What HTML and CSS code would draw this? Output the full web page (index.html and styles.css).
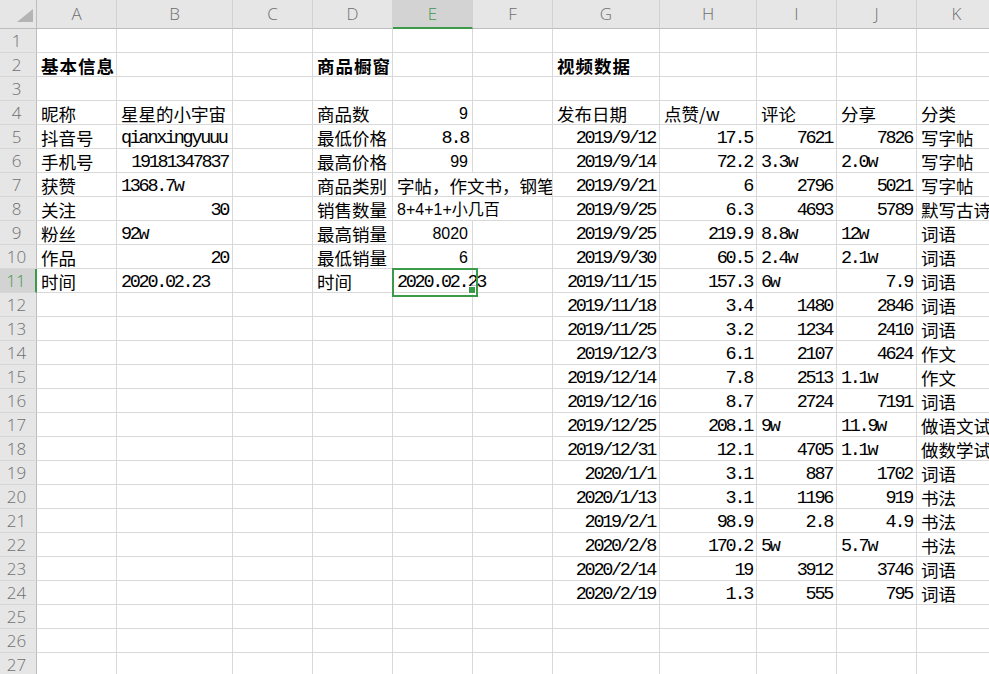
FILE: index.html
```html
<!DOCTYPE html>
<html lang="zh-CN">

<head>
  <meta charset="UTF-8" />
  <title>Sheet1</title>
  <link rel="stylesheet" href="styles.css">
</head>

<body>
  <div class="sheet" id="sheet"></div>

  <script>
    // 表格数据：每行按 A..K 列排列
    let cols = ['A', 'B', 'C', 'D', 'E', 'F', 'G', 'H', 'I', 'J', 'K']
    let rows = {
      2: ['基本信息', '', '', '商品橱窗', '', '', '视频数据'],
      4: ['昵称', '星星的小宇宙', '', '商品数', '9', '', '发布日期', '点赞/w', '评论', '分享', '分类'],
      5: ['抖音号', 'qianxingyuuu', '', '最低价格', '8.8', '', '2019/9/12', '17.5', '7621', '7826', '写字帖'],
      6: ['手机号', '19181347837', '', '最高价格', '99', '', '2019/9/14', '72.2', '3.3w', '2.0w', '写字帖'],
      7: ['获赞', '1368.7w', '', '商品类别', '字帖，作文书，钢笔等', '', '2019/9/21', '6', '2796', '5021', '写字帖'],
      8: ['关注', '30', '', '销售数量', '8+4+1+小几百', '', '2019/9/25', '6.3', '4693', '5789', '默写古诗词'],
      9: ['粉丝', '92w', '', '最高销量', '8020', '', '2019/9/25', '219.9', '8.8w', '12w', '词语'],
      10: ['作品', '20', '', '最低销量', '6', '', '2019/9/30', '60.5', '2.4w', '2.1w', '词语'],
      11: ['时间', '2020.02.23', '', '时间', '2020.02.23', '', '2019/11/15', '157.3', '6w', '7.9', '词语'],
      12: ['', '', '', '', '', '', '2019/11/18', '3.4', '1480', '2846', '词语'],
      13: ['', '', '', '', '', '', '2019/11/25', '3.2', '1234', '2410', '词语'],
      14: ['', '', '', '', '', '', '2019/12/3', '6.1', '2107', '4624', '作文'],
      15: ['', '', '', '', '', '', '2019/12/14', '7.8', '2513', '1.1w', '作文'],
      16: ['', '', '', '', '', '', '2019/12/16', '8.7', '2724', '7191', '词语'],
      17: ['', '', '', '', '', '', '2019/12/25', '208.1', '9w', '11.9w', '做语文试卷'],
      18: ['', '', '', '', '', '', '2019/12/31', '12.1', '4705', '1.1w', '做数学试卷'],
      19: ['', '', '', '', '', '', '2020/1/1', '3.1', '887', '1702', '词语'],
      20: ['', '', '', '', '', '', '2020/1/13', '3.1', '1196', '919', '书法'],
      21: ['', '', '', '', '', '', '2019/2/1', '98.9', '2.8', '4.9', '书法'],
      22: ['', '', '', '', '', '', '2020/2/8', '170.2', '5w', '5.7w', '书法'],
      23: ['', '', '', '', '', '', '2020/2/14', '19', '3912', '3746', '词语'],
      24: ['', '', '', '', '', '', '2020/2/19', '1.3', '555', '795', '词语']
    }
    let spanCells = ['E7', 'E8'] //文字溢出到 F 列
    let sansCells = ['E4', 'E6', 'E8', 'E9', 'E10']
    let active = 'E11'

    let sheet = document.querySelector('#sheet')

    //1.列头
    let corner = document.createElement('div')
    corner.className = 'corner'
    corner.innerHTML = '<span class="tri"></span>'
    sheet.appendChild(corner)
    cols.forEach(function (c) {
      let hd = document.createElement('div')
      hd.className = c === active[0] ? 'hd hd-on' : 'hd'
      hd.innerText = c
      sheet.appendChild(hd)
    })

    //2.行
    for (let r = 1; r <= 27; r++) {
      let rh = document.createElement('div')
      rh.className = String(r) === active.slice(1) ? 'rh rh-on' : 'rh'
      rh.innerText = r
      sheet.appendChild(rh)

      let vals = rows[r] || []
      for (let i = 0; i < cols.length; i++) {
        let id = cols[i] + r
        let v = vals[i] || ''
        let cls = ['cell']
        if (/[\u4e00-\u9fa5，]/.test(v)) {
          cls.push('cjk')
        } else if (v) {
          cls.push('mono')
        }
        if (/^\d+(\.\d+)?$|^\d{4}\/\d+\/\d+$/.test(v)) cls.push('num')
        if (sansCells.includes(id)) cls.push('sans')
        if (r === 2) cls.push('title')
        if (id === active) cls.push('active')
        if (spanCells.includes(id)) {
          cls.push('span2')
          i++
        }
        let cell = document.createElement('div')
        cell.className = cls.join(' ')
        cell.innerText = v
        sheet.appendChild(cell)
      }
    }
  </script>
</body>

</html>
```

FILE: styles.css
```css
* {
  margin: 0;
  padding: 0;
  box-sizing: border-box;
}

body {
  width: 989px;
  height: 674px;
  overflow: hidden;
  background: #fff;
}

.sheet {
  display: grid;
  grid-template-columns: 37px 80px 116px 80px 80px 80px 80px 107px 97px 80px 80px 80px;
  grid-template-rows: 29px;
  grid-auto-rows: 24px;
  width: max-content;
}

.corner,
.hd,
.rh {
  background: #e6e6e6;
  color: #6f6f6f;
  font-family: "Open Sans", "Noto Sans", sans-serif;
  font-size: 17px;
  font-weight: 300;
  text-align: center;
}

.corner {
  display: flex;
  justify-content: flex-end;
  align-items: flex-end;
  padding: 0 3px 6px 0;
  border-right: 1px solid #bdbdbd;
  border-bottom: 1px solid #bdbdbd;
}

.corner .tri {
  width: 16px;
  height: 13px;
  background: #b4b4b4;
  clip-path: polygon(100% 0, 100% 100%, 0 100%);
}

.hd {
  line-height: 27px;
  border-right: 1px solid #d2d2d2;
  border-bottom: 1px solid #bdbdbd;
}

.hd-on {
  background: #d3d3d3;
  color: #3f9a4d;
  border-bottom: 2px solid #3a9a4a;
}

.rh {
  line-height: 23px;
  padding-right: 3px;
  border-right: 1px solid #bdbdbd;
  border-bottom: 1px solid #d6d6d6;
}

.rh-on {
  background: #d3d3d3;
  color: #3f9a4d;
  border-right: 2px solid #3a9a4a;
}

.cell {
  border-right: 1px solid #d9d9d9;
  border-bottom: 1px solid #d9d9d9;
  padding: 1px 3px 0 4px;
  line-height: 23px;
  font-size: 17.5px;
  color: #000;
  white-space: nowrap;
  overflow: hidden;
}

.cjk {
  font-family: "Noto Sans CJK SC", sans-serif;
}

.mono {
  font-family: "Liberation Mono", monospace;
  font-size: 18.5px;
  letter-spacing: -2.3px;
  padding-top: 2px;
}

.sans {
  font-family: "Liberation Sans", "Noto Sans CJK SC", sans-serif;
  font-size: 16px;
  letter-spacing: 0;
  padding-top: 1px;
}

.num {
  text-align: right;
  padding-right: 4px;
}

.title {
  font-weight: 700;
  letter-spacing: 1px;
}

.span2 {
  grid-column: span 2;
}

/* 当前选中单元格 */
.active {
  position: relative;
  overflow: visible;
}

.active::after {
  content: '';
  position: absolute;
  left: -1px;
  top: -1px;
  width: 82px;
  height: 25px;
  border: 2px solid #3a9a4a;
}

.active::before {
  content: '';
  position: absolute;
  right: -4px;
  bottom: -2px;
  width: 6px;
  height: 6px;
  background: #3a9a4a;
  border: 1px solid #fff;
  z-index: 1;
}
```
